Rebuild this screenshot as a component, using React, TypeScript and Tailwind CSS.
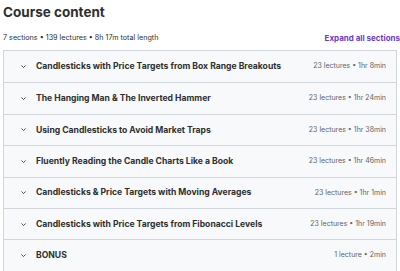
import React from "react";

const sections = [
  { title: "Candlesticks with Price Targets from Box Range Breakouts", meta: "23 lectures • 1hr 8min" },
  { title: "The Hanging Man & The Inverted Hammer", meta: "23 lectures • 1hr 24min" },
  { title: "Using Candlesticks to Avoid Market Traps", meta: "23 lectures • 1hr 38min" },
  { title: "Fluently Reading the Candle Charts Like a Book", meta: "23 lectures • 1hr 46min" },
  { title: "Candlesticks & Price Targets with Moving Averages", meta: "23 lectures • 1hr 1min" },
  { title: "Candlesticks with Price Targets from Fibonacci Levels", meta: "23 lectures • 1hr 19min" },
  { title: "BONUS", meta: "1 lecture • 2min" },
];

const Chevron = () => (
  <svg width="7" height="7" viewBox="0 0 10 10" className="shrink-0">
    <path d="M2 3.5 L5 6.5 L8 3.5" fill="none" stroke="#2d2f31" strokeWidth="1.2" />
  </svg>
);

const App = () => {
  return (
    <div className="w-[400px] h-[271px] bg-white overflow-hidden font-['Inter',sans-serif] text-[#2d2f31]">
      <h2 className="pl-[3px] pt-[2px] h-[22px] text-[13.5px] leading-[20px] font-bold">Course content</h2>
      <div className="flex items-center justify-between pl-[3px] mt-[11px] h-[10px]">
        <span className="text-[7.2px] leading-[10px] text-[#2d2f31]">
          7 sections • 139 lectures • 8h 17m total length
        </span>
        <span className="text-[8px] leading-[10px] font-bold text-[#6a3bc9] whitespace-nowrap">Expand all sections</span>
      </div>
      <ul className="mx-[3px] mt-[7px] border border-[#d1d7dc]">
        {sections.map((s, i) => (
          <li
            key={i}
            className={`flex items-center h-[31.4px] bg-[#f7f9fa] pl-[16px] pr-[10px] ${i > 0 ? "border-t border-[#d1d7dc]" : ""}`}
          >
            <Chevron />
            <span className="ml-[9px] flex-1 text-[8.6px] font-bold truncate">{s.title}</span>
            <span className="text-[7px] text-[#5f6468] whitespace-nowrap">{s.meta}</span>
          </li>
        ))}
      </ul>
    </div>
  );
};

export default App;
